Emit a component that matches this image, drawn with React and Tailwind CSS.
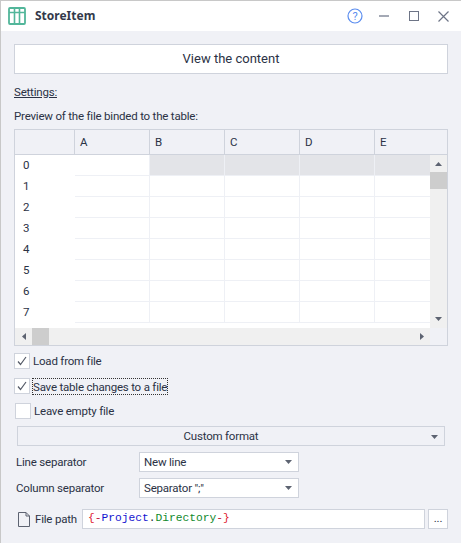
const cols = ["A", "B", "C", "D", "E"];

function Check({ checked, className = "" }) {
  return (
    <span className={"w-[16px] h-[16px] bg-white border border-[#cfd3dc] flex items-center justify-center shrink-0 " + className}>
      {checked && (
        <svg width="10" height="10" viewBox="0 0 10 10" fill="none">
          <path d="M1 5.5 L3.5 8.5 L9 1" stroke="#555b68" strokeWidth="1.2" />
        </svg>
      )}
    </span>
  );
}

function Caret({ className = "" }) {
  return (
    <svg width="7" height="4" viewBox="0 0 7 4" className={className}>
      <path d="M0 0H7L3.5 4Z" fill="#5d6371" />
    </svg>
  );
}

function Select({ label }) {
  return (
    <div className="w-[160px] h-[20px] bg-white border border-[#cfd3dc] flex items-center justify-between pl-[4px] pr-[6px] text-[#2b3245]">
      <span className="pt-[1px]">{label}</span>
      <Caret />
    </div>
  );
}

export default function App() {
  const rows = [0, 1, 2, 3, 4, 5, 6, 7];
  return (
    <div className="w-[461px] h-[543px] bg-[#f0f1f6] border-l border-t border-[#c8c8c8] flex flex-col text-[11.5px] tracking-[-0.2px] text-[#2b3245] overflow-hidden" style={{ fontFamily: 'Roboto, sans-serif' }}>
      <div className="h-[30px] bg-white flex items-center shrink-0 pl-[7px] pr-[12px]">
        <svg width="18" height="18" viewBox="0 0 18 18" fill="none" className="mr-[9px]">
          <rect x="1" y="1" width="16" height="16" rx="1" stroke="#52b69a" strokeWidth="1.8" />
          <path d="M1 5.5H17M6.5 1V17M11.5 1V17" stroke="#52b69a" strokeWidth="1.6" />
        </svg>
        <span className="font-bold text-[12px] tracking-normal text-[#33394a]" style={{ fontFamily: '"Noto Sans", sans-serif' }}>StoreItem</span>
        <div className="ml-auto flex items-center">
          <svg width="16" height="16" viewBox="0 0 16 16" fill="none">
            <circle cx="8" cy="8" r="7" stroke="#5b8def" strokeWidth="1.2" />
            <text x="8" y="12" textAnchor="middle" fontSize="11" fill="#5b8def">?</text>
          </svg>
          <span className="w-[10px] h-[2px] bg-[#a4a9b5] ml-[16px]" />
          <span className="w-[10px] h-[10px] border-[1.5px] border-[#6d7486] ml-[20px]" />
          <svg width="11" height="11" viewBox="0 0 11 11" className="ml-[19px]">
            <path d="M0.5 0.5L10.5 10.5M10.5 0.5L0.5 10.5" stroke="#6d7486" strokeWidth="1.2" />
          </svg>
        </div>
      </div>

      <div className="pl-[13px] pr-[13px] flex flex-col">
        <div className="mt-[13px] h-[30px] bg-white border border-[#cfd3dc] flex items-center justify-center text-[13px] tracking-normal">View the content</div>
        <div className="mt-[10px] underline leading-[16px]">Settings:</div>
        <div className="mt-[8px] leading-[16px]">Preview of the file binded to the table:</div>

        <div className="mt-[5px] h-[217px] border border-[#cfd3dc] bg-white relative overflow-hidden">
          <div className="flex h-[25px] bg-[#f0f1f6] border-b border-[#cfd3dc]">
            <div className="w-[60px] shrink-0 border-r border-[#cfd3dc]" />
            {cols.map((c) => (
              <div key={c} className="w-[75px] shrink-0 border-r border-[#cfd3dc] last:border-r-0 pl-[5px] pt-[1px] flex items-center">{c}</div>
            ))}
          </div>
          {rows.map((r) => (
            <div key={r} className="flex h-[21px]">
              <div className="w-[60px] shrink-0 pl-[8px] pt-[1px] flex items-center">{r}</div>
              {cols.map((c) => (
                <div key={c} className={"w-[75px] shrink-0 border-r border-b border-[#eef0f5] " + (r === 0 && c !== "A" ? "bg-[#e3e4e8]" : "")} />
              ))}
            </div>
          ))}
          <div className="absolute right-0 top-[25px] bottom-[17px] w-[17px] bg-[#f0f0f0] flex flex-col items-center">
            <svg width="7" height="4" viewBox="0 0 7 4" className="mt-[7px]"><path d="M0 4H7L3.5 0Z" fill="#5d6371" /></svg>
            <div className="w-[17px] h-[17px] bg-[#cdcdcd] mt-[6px]" />
            <Caret className="mt-auto mb-[7px]" />
          </div>
          <div className="absolute left-0 right-[17px] bottom-0 h-[17px] bg-[#f0f0f0] flex items-center">
            <svg width="4" height="7" viewBox="0 0 4 7" className="ml-[7px]"><path d="M4 0V7L0 3.5Z" fill="#5d6371" /></svg>
            <div className="w-[17px] h-[17px] bg-[#cdcdcd] ml-[6px]" />
            <svg width="4" height="7" viewBox="0 0 4 7" className="ml-auto mr-[6px]"><path d="M0 0V7L4 3.5Z" fill="#5d6371" /></svg>
          </div>
          <div className="absolute right-0 bottom-0 w-[17px] h-[17px] bg-[#f0f1f6]" />
        </div>

        <div className="mt-[7px] h-[16px] flex items-center"><Check checked /><span className="ml-[3px] pt-[1px]">Load from file</span></div>
        <div className="mt-[9px] h-[16px] flex items-center"><Check checked /><span className="ml-[3px] outline-1 outline-dotted outline-[#333] leading-[14px] pt-[1px]">Save table changes to a file</span></div>
        <div className="mt-[9px] h-[16px] flex items-center ml-[1px]"><Check /><span className="ml-[3px] pt-[1px]">Leave empty file</span></div>

        <div className="mt-[7px] ml-[3px] w-[428px] h-[20px] border border-[#cfd3dc] flex items-center justify-center relative pr-[20px] pt-[1px]">
          Custom format
          <Caret className="absolute right-[6px] top-[8px]" />
        </div>

        <div className="mt-[6px] ml-[2px] flex items-center h-[20px]"><span className="w-[123px] pt-[1px]">Line separator</span><Select label="New line" /></div>
        <div className="mt-[6px] ml-[2px] flex items-center h-[20px]"><span className="w-[123px] pt-[1px]">Column separator</span><Select label={'Separator ";"'} /></div>

        <div className="mt-[11px] ml-[4px] flex items-center h-[20px]">
          <svg width="12" height="15" viewBox="0 0 12 15" fill="none" className="shrink-0"><path d="M0.5 0.5H8L11.5 4V14.5H0.5Z M8 0.5V4H11.5" stroke="#5d6371" /></svg>
          <span className="ml-[5px] w-[47px] shrink-0 whitespace-nowrap pt-[1px]">File path</span>
          <div className="w-[343px] shrink-0 h-[20px] bg-white border border-[#cfd3dc] flex items-center pl-[5px] text-[11.25px] tracking-normal leading-none" style={{ fontFamily: '"Liberation Mono", monospace' }}>
            <span className="text-[#e0202f]">{"{"}</span><span className="text-[#c0103a]">-</span><span className="text-[#1414d0]">Project</span><span>.</span><span className="text-[#118a2b]">Directory</span><span className="text-[#c0103a]">-</span><span className="text-[#e0202f]">{"}"}</span>
          </div>
          <div className="ml-[3px] w-[20px] shrink-0 h-[20px] bg-white border border-[#cfd3dc] flex items-center justify-center">...</div>
        </div>
      </div>
    </div>
  );
}
